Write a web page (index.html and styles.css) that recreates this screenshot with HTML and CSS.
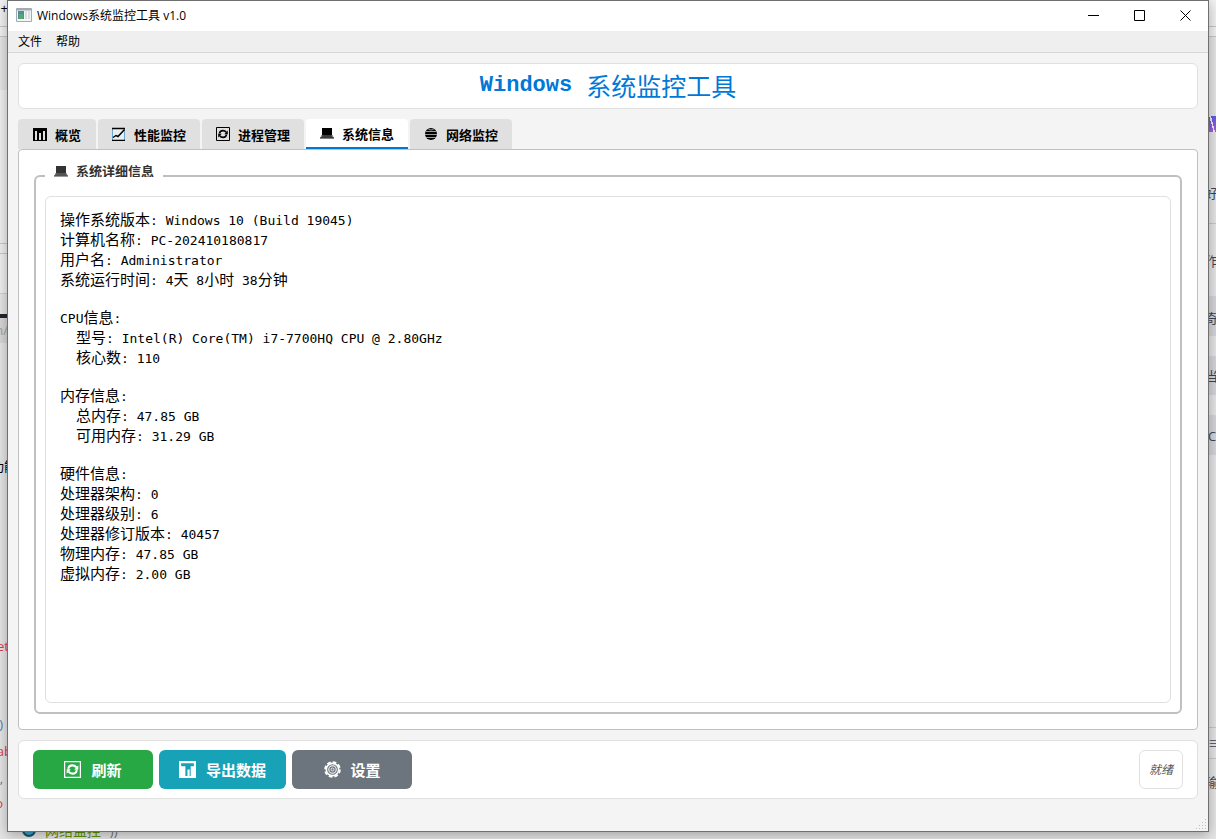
FILE: index.html
```html
<!DOCTYPE html>
<html lang="zh-CN">
<head>
    <meta charset="UTF-8">
    <title>Windows系统监控工具 v1.0</title>
    <link rel="stylesheet" href="styles.css">
</head>
<body>
    <svg class="sprite" aria-hidden="true">
        <symbol id="icon-chart" viewBox="0 0 14 14">
            <path fill="currentColor" fill-rule="evenodd" d="M0 1h14v13H0zM2 4v9h2V4zM6 6v7h2V6zM10 4v9h2V4z"/>
        </symbol>
        <symbol id="icon-bars" viewBox="0 0 16 16">
            <path fill="currentColor" fill-rule="evenodd" d="M0 0h16v16H0zM2 2v3h4v9h2V8h2v6h1V5h3V2z"/>
        </symbol>
        <symbol id="icon-trend" viewBox="0 0 14 14">
            <path fill="#e8eef2" stroke="#6ea5cf" d="M.5 1.500h12v12H.5z"/>
            <path fill="none" stroke="currentColor" stroke-width="1.300" d="M0 1.500h13M0 13.400h13"/>
            <path fill="none" stroke="currentColor" stroke-width="1.500" d="M1 10.500l3-2 2 1 6.500-7"/>
        </symbol>
        <symbol id="icon-refresh" viewBox="0 0 14 14">
            <path fill="none" stroke="currentColor" d="M.5 .5h13v13H.5z"/>
            <path fill="none" stroke="currentColor" stroke-width="1.700" d="M3.500 6.500C3.700 4.700 5.200 3.600 7 3.600c1.500 0 2.500 .6 3.200 1.600M10.500 7.500C10.300 9.300 8.800 10.400 7 10.400c-1.500 0-2.500-.6-3.200-1.600"/>
            <path fill="currentColor" d="M11.800 3.500v3.700H8.300zM2.200 10.500V6.800h3.500z"/>
        </symbol>
        <symbol id="icon-laptop" viewBox="0 0 14 14">
            <path fill="currentColor" d="M2 2h10v7H2z"/>
            <path fill="#777" d="M1.500 9h11l1.200 3H.3z"/>
            <path fill="currentColor" d="M2.500 9.600h9l.4 .9H2.100zM0 11.600h14v1H0z"/>
        </symbol>
        <symbol id="icon-globe" viewBox="0 0 14 14">
            <circle cx="7" cy="7" r="6" fill="currentColor"/>
            <path fill="none" stroke="#999" d="M2 4.500h10M1 7.500h12M2 10.500h10M4.500 2.500Q7 3.500 9.500 2.500"/>
        </symbol>
        <symbol id="icon-gear" viewBox="0 0 16 16">
            <circle cx="8" cy="8" r="7" fill="none" stroke="currentColor" stroke-width="1.600" stroke-dasharray="3.500 2"/>
            <circle cx="8" cy="8" r="5.800" fill="none" stroke="currentColor" stroke-width="1.500"/>
            <circle cx="8" cy="8" r="3.500" fill="none" stroke="currentColor"/>
            <circle cx="8" cy="8" r="1.400" fill="none" stroke="currentColor" stroke-width=".8"/>
        </symbol>
    </svg>

    <!-- Windows lying behind the application -->
    <div class="behind behind-left" aria-hidden="true">
        <span class="block l-top"></span>
        <span class="block l-rule1"></span>
        <span class="block l-rule2"></span>
        <span class="block l-pane"></span>
        <span class="block l-rule3"></span>
        <span class="block l-rule4"></span>
        <span class="block l-bar"></span>
        <span class="block l-input"></span>
        <span class="scrap l-plus">+</span>
        <span class="scrap l-path">n/</span>
        <span class="scrap l-func">功能</span>
        <span class="scrap l-et red">et</span>
        <span class="scrap l-paren">)</span>
        <span class="scrap l-ab red">ab</span>
        <span class="scrap l-comma">,</span>
        <span class="scrap l-o red">o</span>
    </div>
    <div class="behind behind-right" aria-hidden="true">
        <span class="block r-top"></span>
        <span class="block r-rule1"></span>
        <span class="block r-rule2"></span>
        <span class="block r-logo"></span>
        <span class="block r-rule3"></span>
        <span class="block r-item1"></span>
        <span class="block r-item2"></span>
        <span class="block r-item3"></span>
        <span class="block r-rule4"></span>
        <span class="block r-rule5"></span>
        <span class="scrap r-hao">好</span>
        <span class="scrap r-zuo">作</span>
        <span class="scrap r-qi">奇</span>
        <span class="scrap r-dang">当</span>
        <span class="scrap r-c">C</span>
        <span class="scrap r-menu">≡</span>
        <span class="scrap r-shu">输</span>
    </div>
    <div class="behind behind-bottom" aria-hidden="true">
        <span class="block b-globe"></span>
        <span class="scrap b-text">网络监控</span>
        <span class="scrap b-paren">'))</span>
    </div>

    <div class="window">
        <header class="titlebar">
            <svg class="app-icon" viewBox="0 0 16 14" aria-hidden="true">
                <path fill="#f4f6f7" stroke="#a3abb0" d="M.5 .5h15v13H.5z"/>
                <path fill="#a3abb0" d="M1 1h14v1.500H1z"/>
                <path fill="#4a8f9a" d="M2 3h6v8H2z"/>
                <path fill="#55a872" d="M3 6h4v5H3z"/>
                <path fill="#d9dee2" d="M9 3h2v8H9zM12 3h2v8h-2z"/>
            </svg>
            <span class="caption">Windows系统监控工具 v1.0</span>
            <div class="window-controls">
                <button type="button" aria-label="最小化"><svg viewBox="0 0 11 11"><path d="M0 5.500h11"/></svg></button>
                <button type="button" aria-label="最大化"><svg viewBox="0 0 11 11"><path d="M.5 .5h10v10H.5z"/></svg></button>
                <button type="button" aria-label="关闭"><svg viewBox="0 0 11 11"><path d="M.5 .5l10 10M10.500 .5l-10 10"/></svg></button>
            </div>
        </header>

        <nav class="menubar">
            <button type="button">文件</button>
            <button type="button">帮助</button>
        </nav>

        <main class="content">
            <h1 class="banner"><span class="latin">Windows</span><span>系统监控工具</span></h1>

            <div class="tab-widget">
                <div class="tabs" role="tablist">
                    <button type="button" class="tab" role="tab"><svg><use href="#icon-chart"/></svg>概览</button>
                    <button type="button" class="tab" role="tab"><svg><use href="#icon-trend"/></svg>性能监控</button>
                    <button type="button" class="tab" role="tab"><svg><use href="#icon-refresh"/></svg>进程管理</button>
                    <button type="button" class="tab active" role="tab" aria-selected="true"><svg><use href="#icon-laptop"/></svg>系统信息</button>
                    <button type="button" class="tab" role="tab"><svg><use href="#icon-globe"/></svg>网络监控</button>
                </div>

                <div class="panel" role="tabpanel">
                    <fieldset class="group">
                        <legend><span class="group-title"><svg><use href="#icon-laptop"/></svg>系统详细信息</span></legend>
                        <div class="info">
                            <section>
                                <p>操作系统版本<span class="mono">: Windows 10 (Build 19045)</span></p>
                                <p>计算机名称<span class="mono">: PC-202410180817</span></p>
                                <p>用户名<span class="mono">: Administrator</span></p>
                                <p>系统运行时间<span class="mono">: 4</span>天<span class="mono"> 8</span>小时<span class="mono"> 38</span>分钟</p>
                            </section>
                            <section>
                                <p><span class="mono">CPU</span>信息<span class="mono">:</span></p>
                                <p class="indent">型号<span class="mono">: Intel(R) Core(TM) i7-7700HQ CPU @ 2.80GHz</span></p>
                                <p class="indent">核心数<span class="mono">: 110</span></p>
                            </section>
                            <section>
                                <p>内存信息<span class="mono">:</span></p>
                                <p class="indent">总内存<span class="mono">: 47.85 GB</span></p>
                                <p class="indent">可用内存<span class="mono">: 31.29 GB</span></p>
                            </section>
                            <section>
                                <p>硬件信息<span class="mono">:</span></p>
                                <p>处理器架构<span class="mono">: 0</span></p>
                                <p>处理器级别<span class="mono">: 6</span></p>
                                <p>处理器修订版本<span class="mono">: 40457</span></p>
                                <p>物理内存<span class="mono">: 47.85 GB</span></p>
                                <p>虚拟内存<span class="mono">: 2.00 GB</span></p>
                            </section>
                        </div>
                    </fieldset>
                </div>
            </div>

            <div class="actions">
                <button type="button" class="btn btn-refresh"><svg><use href="#icon-refresh"/></svg>刷新</button>
                <button type="button" class="btn btn-export"><svg><use href="#icon-bars"/></svg>导出数据</button>
                <button type="button" class="btn btn-settings"><svg><use href="#icon-gear"/></svg>设置</button>
                <span class="status" role="status">就绪</span>
            </div>
        </main>

        <footer class="statusbar">
            <svg class="grip" viewBox="0 0 11 11" aria-hidden="true">
                <path fill="#bfbfbf" d="M9 0h1v1H9zM6 3h1v1H6zM9 3h1v1H9zM3 6h1v1H3zM6 6h1v1H6zM9 6h1v1H9zM0 9h1v1H0zM3 9h1v1H3zM6 9h1v1H6zM9 9h1v1H9z"/>
            </svg>
        </footer>
    </div>
</body>
</html>
```
FILE: styles.css
```css
* {
    box-sizing: border-box;
}

body {
    margin: 0;
    padding: 0 7px 7px;
    height: 100vh;
    display: flex;
    position: relative;
    overflow: hidden;
    background: #e6e6e6;
    color: #000;
    font-family: "Open Sans", "Noto Sans CJK SC", sans-serif;
    font-size: 12px;
}

button {
    font: inherit;
    color: inherit;
    border: none;
    background: none;
    padding: 0;
}

p, h1 {
    margin: 0;
}

.sprite {
    position: absolute;
    width: 0;
    height: 0;
}

/* Main window */
.window {
    flex: 1;
    display: flex;
    flex-direction: column;
    position: relative;
    border: 1px solid #707070;
    background: #f4f4f4;
    box-shadow: 0 3px 12px rgba(0, 0, 0, 0.3);
}

.titlebar {
    display: flex;
    align-items: center;
    height: 30px;
    padding: 0 0 2px 8px;
    background: #fff;
}

.app-icon {
    width: 16px;
    height: 14px;
    margin-right: 5px;
}

.window-controls {
    display: flex;
    margin-left: auto;
}

.window-controls button {
    display: flex;
    align-items: center;
    justify-content: center;
    width: 46px;
    height: 28px;
}

.window-controls svg {
    width: 11px;
    height: 11px;
    fill: none;
    stroke: #000;
}

.menubar {
    display: flex;
    align-items: center;
    gap: 14px;
    height: 22px;
    padding: 0 10px 1px;
    background: #efefef;
    border-bottom: 1px solid #d7d7d7;
}

.content {
    flex: 1;
    display: flex;
    flex-direction: column;
    gap: 10px;
    padding: 10px;
}

.banner {
    display: flex;
    align-items: center;
    justify-content: center;
    gap: 14px;
    height: 46px;
    border: 1px solid #e0e0e0;
    border-radius: 6px;
    background: #fff;
    color: #0078d7;
    font-size: 25px;
    font-weight: normal;
    line-height: 44px;
}

.banner .latin {
    font-family: "Liberation Mono", monospace;
    font-size: 22px;
    font-weight: bold;
}

/* Tabs */
.tab-widget {
    flex: 1;
    display: flex;
    flex-direction: column;
}

.tabs {
    display: flex;
    gap: 2px;
}

.tab {
    display: flex;
    align-items: center;
    justify-content: center;
    gap: 8px;
    min-width: 78px;
    height: 30px;
    padding: 0 14px;
    border-radius: 4px 4px 0 0;
    background: #e0e0e0;
    font-size: 13px;
    font-weight: bold;
}

.tab svg,
.group-title svg {
    width: 14px;
    height: 14px;
}

.tab.active {
    background: #fff;
    border-bottom: 2px solid #0078d7;
}

.panel {
    flex: 1;
    display: flex;
    padding: 14px 15px 15px;
    border: 1px solid #c0c0c0;
    border-radius: 4px;
    background: #fff;
}

.group {
    flex: 1;
    min-width: 0;
    margin: 0;
    padding: 8px 9px 9px;
    border: 2px solid #c0c0c0;
    border-radius: 6px;
}

.group legend {
    height: 24px;
    padding: 0 9px;
    color: #333;
    font-size: 13px;
    font-weight: bold;
}

/* The title is cut off at the frame line */
.group-title {
    display: flex;
    align-items: center;
    gap: 8px;
    height: 13px;
    line-height: 16px;
    overflow: hidden;
}

.info {
    height: 100%;
    padding: 12px 14px;
    border: 1px solid #e0e0e0;
    border-radius: 6px;
    background: #fff;
    font-family: "Noto Sans CJK SC", sans-serif;
    font-size: 15px;
    line-height: 20px;
}

.info section {
    margin-bottom: 18px;
}

.info p {
    height: 20px;
    white-space: pre;
}

.info .indent {
    padding-left: 16px;
}

.mono {
    font-family: "DejaVu Sans Mono", monospace;
    font-size: 13px;
}

/* Bottom bar */
.actions {
    display: flex;
    align-items: center;
    gap: 6px;
    padding: 9px 14px;
    border: 1px solid #e0e0e0;
    border-radius: 6px;
    background: #fff;
}

.btn {
    display: flex;
    align-items: center;
    justify-content: center;
    gap: 10px;
    min-width: 120px;
    height: 39px;
    padding: 0 20px;
    border-radius: 6px;
    color: #fff;
    font-size: 15px;
    font-weight: bold;
}

.btn svg {
    width: 17px;
    height: 17px;
}

.btn-refresh {
    background: #28a745;
}

.btn-export {
    background: #17a2b8;
}

.btn-settings {
    background: #6c757d;
}

.status {
    margin-left: auto;
    height: 39px;
    padding: 0 9px;
    border: 1px solid #e0e0e0;
    border-radius: 6px;
    color: #555;
    font-style: italic;
    line-height: 37px;
}

.statusbar {
    display: flex;
    align-items: flex-end;
    justify-content: flex-end;
    height: 22px;
    padding: 0 1px 1px;
}

.grip {
    width: 11px;
    height: 11px;
}

/* Whatever shows around the window edges */
.behind {
    position: absolute;
    overflow: hidden;
    font-size: 13px;
    line-height: 16px;
}

.behind-left {
    left: 0;
    top: 0;
    bottom: 0;
    width: 8px;
}

.behind-right {
    right: 0;
    top: 0;
    bottom: 0;
    width: 8px;
}

.behind-bottom {
    left: 0;
    right: 0;
    bottom: 0;
    height: 8px;
}

.block,
.scrap {
    position: absolute;
}

.block {
    left: 0;
    width: 100%;
    height: 1px;
    background: #c8c8c8;
}

.scrap {
    right: 0;
    white-space: nowrap;
}

.behind-right .scrap {
    right: auto;
    left: -3px;
    color: #3c4657;
}

.red {
    color: #dc3c50;
}

.l-top, .r-top { top: 0; height: 36px; background: #f2f2f2; }
.l-rule1, .r-rule1 { top: 26px; }
.l-rule2, .r-rule2 { top: 36px; }
.l-pane { top: 90px; height: 204px; background: #f0f0f0; border-bottom: 1px solid #d0d0d0; }
.l-rule3 { top: 243px; }
.l-rule4 { top: 253px; }
.l-bar { top: 314px; height: 4px; background: #22262b; }
.l-input { top: 318px; height: 25px; background: #d8d8d8; }
.l-plus { top: 0; }
.l-path { top: 322px; color: #a0a0a0; }
.l-func { top: 458px; right: -9px; }
.l-et { top: 638px; right: -1px; }
.l-paren { top: 716px; right: 5px; color: #5578b0; }
.l-ab { top: 743px; right: -4px; }
.l-comma { top: 770px; right: 5px; color: #5578b0; }
.l-o { top: 795px; right: 5px; }

.r-logo { top: 116px; height: 16px; background: linear-gradient(75deg, transparent 45%, #f0eafa 45%, #f0eafa 58%, transparent 58%), linear-gradient(#5b5bea, #a55fd8); }
.r-rule3 { top: 223px; }
.r-item1 { top: 296px; height: 40px; background: #d6d6da; }
.r-item2 { top: 356px; height: 39px; background: #d6d6da; }
.r-item3 { top: 415px; height: 40px; background: #d6d6da; }
.r-rule4 { top: 727px; }
.r-rule5 { top: 758px; }
.r-hao { top: 185px; }
.r-zuo { top: 253px; }
.r-qi { top: 310px; }
.r-dang { top: 368px; }
.behind-right .r-c { top: 428px; left: 0; }
.behind-right .r-menu { top: 735px; left: 0; }
.r-shu { top: 774px; }

.b-globe { left: 22px; bottom: 2px; width: 14px; height: 14px; border: 2px solid #1f4f66; border-radius: 50%; background: #35a6cf; }
.b-text { left: 45px; bottom: 0; right: auto; color: #5f9300; font-size: 14px; }
.b-paren { left: 107px; bottom: 0; right: auto; color: #777; }
```
